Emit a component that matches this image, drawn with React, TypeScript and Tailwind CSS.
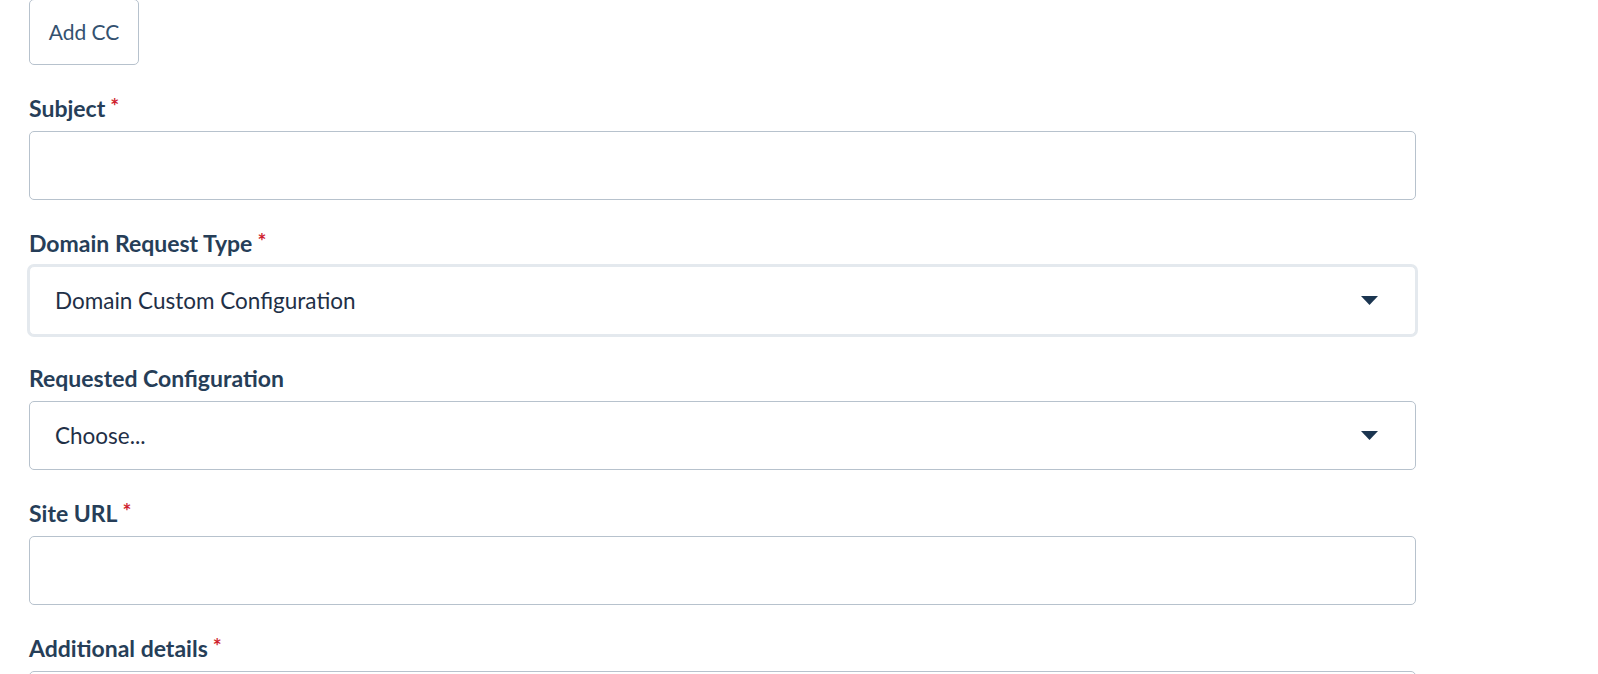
import React from "react";

function Caret() {
  return (
    <svg width="17" height="9" viewBox="0 0 17 9" className="shrink-0">
      <path d="M0 0 L17 0 L8.5 9 Z" fill="#1b3550" />
    </svg>
  );
}

function Label({ text, required }: { text: string; required?: boolean }) {
  return (
    <div className="h-[28px] leading-[28px] text-[23px] font-bold text-[#263e58] mb-[9px] whitespace-nowrap">
      {text}
      {required && (
        <span className="text-[#cf1f2f] text-[21px] font-bold ml-[5px] relative top-[-3px]">*</span>
      )}
    </div>
  );
}

export default function App() {
  return (
    <div
      className="min-h-screen bg-white pl-[29px]"
      style={{ fontFamily: "Lato, 'Open Sans', sans-serif" }}
    >
      <div className="w-[1387px] flex flex-col">
        <div className="flex">
          <button className="-mt-px h-[66px] w-[110px] border border-[#b7c2cd] rounded-[5px] text-[21px] text-[#34516f] bg-white">
            Add CC
          </button>
        </div>

        <div className="mt-[29px]">
          <Label text="Subject" required />
          <div className="h-[69px] border border-[#b7c2cd] rounded-[5px] bg-white" />
        </div>

        <div className="mt-[29px]">
          <Label text="Domain Request Type" required />
          <div className="h-[69px] border border-[#e4e9ee] ring-2 ring-[#e4e9ee] rounded-[5px] bg-white flex items-center justify-between pl-[25px] pr-[37px]">
            <span className="text-[22.5px] text-[#1f3047]">Domain Custom Configuration</span>
            <Caret />
          </div>
        </div>

        <div className="mt-[29px]">
          <Label text="Requested Configuration" />
          <div className="h-[69px] border border-[#b7c2cd] rounded-[5px] bg-white flex items-center justify-between pl-[25px] pr-[37px]">
            <span className="text-[22.5px] text-[#1f3047]">Choose...</span>
            <Caret />
          </div>
        </div>

        <div className="mt-[29px]">
          <Label text="Site URL" required />
          <div className="h-[69px] border border-[#b7c2cd] rounded-[5px] bg-white" />
        </div>

        <div className="mt-[29px]">
          <Label text="Additional details" required />
          <div className="h-[69px] border border-[#b7c2cd] rounded-[5px] bg-white" />
        </div>
      </div>
    </div>
  );
}
